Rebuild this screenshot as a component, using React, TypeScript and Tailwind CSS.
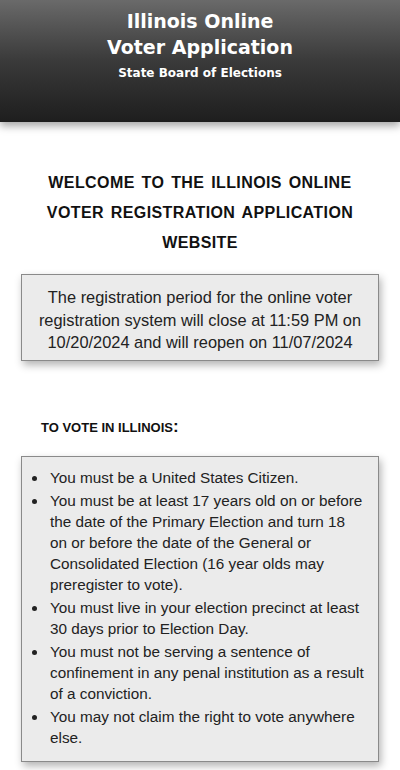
const requirements = [
  "You must be a United States Citizen.",
  "You must be at least 17 years old on or before the date of the Primary Election and turn 18 on or before the date of the General or Consolidated Election (16 year olds may preregister to vote).",
  "You must live in your election precinct at least 30 days prior to Election Day.",
  "You must not be serving a sentence of confinement in any penal institution as a result of a conviction.",
  "You may not claim the right to vote anywhere else.",
];

function Header() {
  return (
    <header className="h-[122px] bg-gradient-to-b from-[#6a6a6a] via-[#3a3a3a] to-[#1e1e1e] text-white text-center font-['DejaVu_Sans',sans-serif] font-bold shadow-[0_4px_8px_rgba(0,0,0,0.35)] pt-[8px]">
      <div className="text-[19px] leading-[26px]">Illinois Online</div>
      <div className="text-[19px] leading-[26px]">Voter Application</div>
      <div className="text-[12px] leading-[22px] mt-[2px]">State Board of Elections</div>
    </header>
  );
}

export default function App() {
  return (
    <div className="min-h-[770px] bg-white font-['Liberation_Sans',Arial,sans-serif] text-[#222]">
      <Header />
      <main className="px-[21px] pt-[46px] pb-[10px]">
        <h1 className="text-center font-bold text-[16px] leading-[30px] tracking-[0.4px] [word-spacing:2px] text-[#111] px-[10px]">
          WELCOME TO THE ILLINOIS ONLINE VOTER REGISTRATION APPLICATION WEBSITE
        </h1>
        <div className="mt-[16px] bg-[#ebebeb] border border-[#8a8a8a] shadow-[2px_4px_8px_rgba(0,0,0,0.3)] px-[10px] pt-[11px] pb-[6px] text-center text-[16.4px] leading-[22.5px] text-[#222]">
          The registration period for the online voter registration system will close at 11:59 PM on
          10/20/2024 and will reopen on 11/07/2024
        </div>
        <h2 className="mt-[56px] ml-[20px] font-bold text-[13px] leading-[20px] text-[#111]">
          TO VOTE IN ILLINOIS<span className="text-[17px]">:</span>
        </h2>
        <ul className="mt-[18px] bg-[#ebebeb] border border-[#8a8a8a] shadow-[2px_4px_8px_rgba(0,0,0,0.3)] pl-[26px] pr-[12px] pt-[10px] pb-[13px] text-[15.3px] leading-[21px] text-[#222] list-disc">
          {requirements.map((r) => (
            <li key={r} className="pl-[2px] mb-[2px] last:mb-0">
              {r}
            </li>
          ))}
        </ul>
      </main>
    </div>
  );
}
